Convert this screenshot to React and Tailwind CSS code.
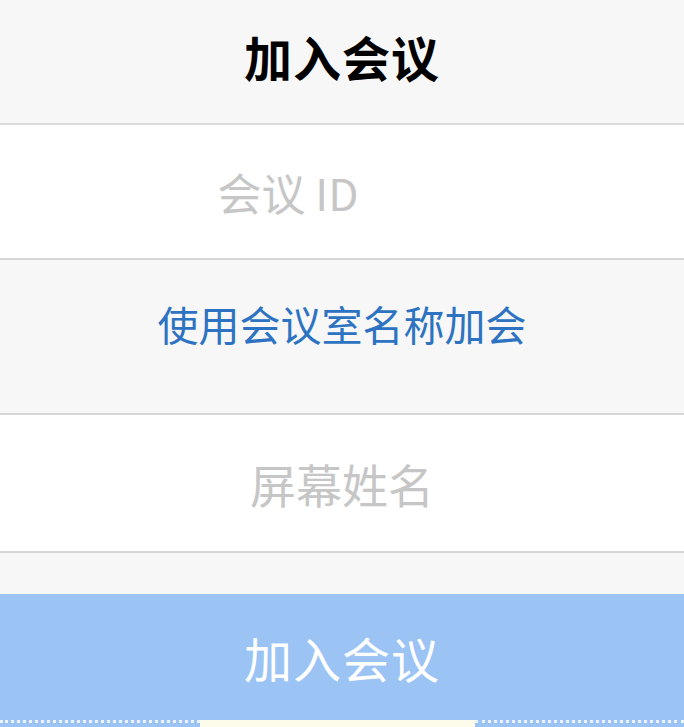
import React, { useState } from 'react';

const cjk = { fontFamily: '"Noto Sans CJK SC", "Noto Sans", sans-serif' };

export default function App() {
  const [meetingId, setMeetingId] = useState('');
  const [name, setName] = useState('');

  return (
    <div className="w-[684px] h-[727px] overflow-hidden bg-[#f7f7f7] flex flex-col" style={cjk}>
      <header className="h-[125px] flex items-center justify-center pb-3 border-b-2 border-[#dadada]">
        <h1 className="text-[48px] leading-none font-semibold text-black tracking-[1px]">加入会议</h1>
      </header>

      <div className="h-[135px] bg-white flex items-center justify-center border-b-2 border-[#d6d6d6] pr-[108px]">
        <input
          value={meetingId}
          onChange={(e) => setMeetingId(e.target.value)}
          placeholder="会议 ID"
          className="w-[200px] text-center text-[44px] leading-none outline-none bg-transparent placeholder:text-[#c6c6c6] text-gray-800"
        />
      </div>

      <div className="h-[155px] flex items-start justify-center pt-[43px] border-b-2 border-[#d6d6d6]">
        <button className="text-[41px] leading-none text-[#2d73c2]">使用会议室名称加会</button>
      </div>

      <div className="h-[138px] bg-white flex items-center justify-center border-b-2 border-[#d6d6d6]">
        <input
          value={name}
          onChange={(e) => setName(e.target.value)}
          placeholder="屏幕姓名"
          className="w-[400px] text-center text-[46px] leading-none outline-none bg-transparent placeholder:text-[#c6c6c6] text-gray-800"
        />
      </div>

      <div className="h-[41px]" />

      <button className="h-[126px] bg-[#9bc3f4] flex items-center justify-center">
        <span className="text-[48px] leading-none text-white tracking-[1px]">加入会议</span>
      </button>

      <div className="flex-1 bg-[#9bc3f4] flex">
        <div className="w-[200px] border-t-[3px] border-dotted border-white/80" />
        <div className="w-[275px] bg-[#fdfbe9]" />
        <div className="flex-1 border-t-[3px] border-dotted border-white/80" />
      </div>
    </div>
  );
}
